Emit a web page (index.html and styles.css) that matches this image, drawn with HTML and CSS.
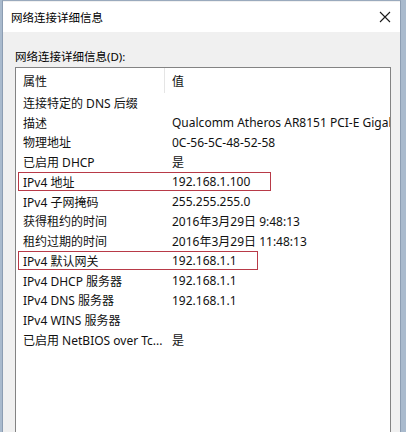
FILE: index.html
```html
<!DOCTYPE html>
<html lang="zh-CN">
<head>
  <meta charset="UTF-8" />
  <title>网络连接详细信息</title>
  <link rel="stylesheet" href="styles.css">
</head>
<body>
  <div class="window">
    <!-- Title bar -->
    <div class="titlebar">
      <span class="title">网络连接详细信息</span>
      <svg class="close" width="12" height="12" viewBox="0 0 12 12">
        <path d="M1 1 L11 11 M11 1 L1 11" stroke="#1a1a1a" stroke-width="1.1" fill="none" />
      </svg>
    </div>

    <div class="content">
      <p class="label">网络连接详细信息(D):</p>

      <div class="listview">
        <div class="row header">
          <span class="col1">属性</span>
          <span class="col2">值</span>
        </div>
        <div class="row"><span class="col1">连接特定的 DNS 后缀</span><span class="col2"></span></div>
        <div class="row"><span class="col1">描述</span><span class="col2">Qualcomm Atheros AR8151 PCI-E Gigabit Ethernet Controller</span></div>
        <div class="row"><span class="col1">物理地址</span><span class="col2">0C-56-5C-48-52-58</span></div>
        <div class="row"><span class="col1">已启用 DHCP</span><span class="col2">是</span></div>
        <div class="row"><span class="col1">IPv4 地址</span><span class="col2">192.168.1.100</span><span class="mark mark-wide"></span></div>
        <div class="row"><span class="col1">IPv4 子网掩码</span><span class="col2">255.255.255.0</span></div>
        <div class="row"><span class="col1">获得租约的时间</span><span class="col2">2016年3月29日 9:48:13</span></div>
        <div class="row"><span class="col1">租约过期的时间</span><span class="col2">2016年3月29日 11:48:13</span></div>
        <div class="row"><span class="col1">IPv4 默认网关</span><span class="col2">192.168.1.1</span><span class="mark mark-narrow"></span></div>
        <div class="row"><span class="col1">IPv4 DHCP 服务器</span><span class="col2">192.168.1.1</span></div>
        <div class="row"><span class="col1">IPv4 DNS 服务器</span><span class="col2">192.168.1.1</span></div>
        <div class="row"><span class="col1">IPv4 WINS 服务器</span><span class="col2"></span></div>
        <div class="row"><span class="col1">已启用 NetBIOS over Tc...</span><span class="col2">是</span></div>
      </div>
    </div>
  </div>
</body>
</html>
```

FILE: styles.css
```css
/* Reset */
* {
  margin: 0;
  padding: 0;
  box-sizing: border-box;
}
body {
  background: #a9bacd;
  height: 432px;
  overflow: hidden;
  font-family: "Noto Sans", "Noto Sans CJK SC", sans-serif;
  font-size: 12px;
  color: #111;
}

/* Window frame */
.window {
  margin-left: 2px;
  width: 399px;
  height: 432px;
  overflow: hidden;
  background: #f0f0f0;
  border-left: 1px solid #8c9db2;
  border-right: 1px solid #8c9db2;
  border-top: 1px solid #9aaabd;
}

/* Title bar */
.titlebar {
  height: 30px;
  background: #fff;
  display: flex;
  align-items: center;
  justify-content: space-between;
  padding: 0 9px 0 8px;
  margin-top: 1px;
}
.title {
  font-size: 11.5px;
  color: #000;
}

/* Body */
.content {
  padding: 16px 10px 0 12px;
}
.label {
  font-size: 11.5px;
  line-height: 18px;
  color: #000;
}

/* List view */
.listview {
  margin-top: 1px;
  height: 380px;
  background: #fff;
  border: 1px solid #838383;
  border-bottom: none;
  width: 376px;
  overflow: hidden;
}
.row {
  position: relative;
  display: flex;
  height: 19.75px;
  align-items: center;
  white-space: nowrap;
}
.row.header {
  height: 25px;
}
.col1 {
  width: 149px;
  flex-shrink: 0;
  padding-left: 7px;
  overflow: hidden;
}
.col2 {
  padding-left: 7px;
}
.header .col1 {
  height: 100%;
  display: flex;
  align-items: center;
  border-right: 1px solid #e5e5e5;
}

/* Red annotation boxes */
.mark {
  position: absolute;
  left: 2px;
  top: 0;
  height: 19px;
  border: 1px solid #b83a48;
}
.mark-wide {
  width: 253px;
}
.mark-narrow {
  width: 240px;
}
```
